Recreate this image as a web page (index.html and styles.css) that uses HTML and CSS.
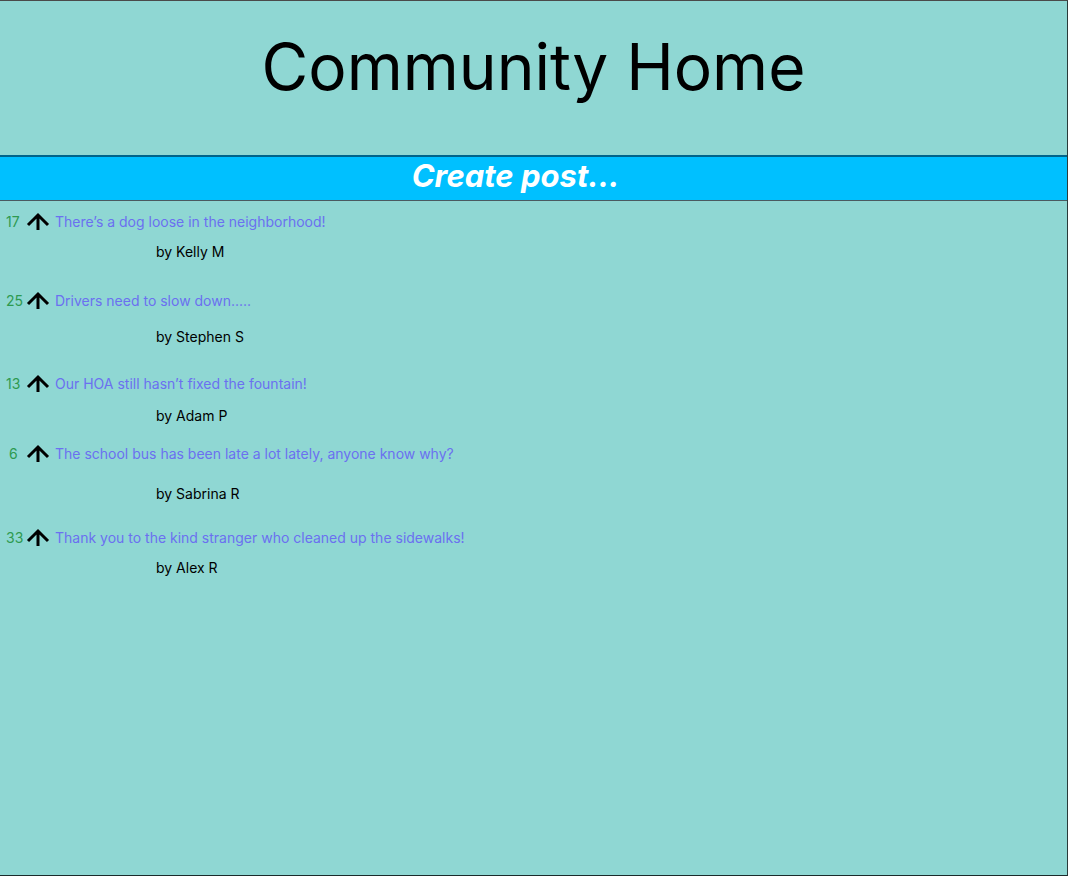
FILE: index.html
```html
<!DOCTYPE html>
<html>
<head>
<meta charset="utf-8">
<link rel="stylesheet" href="styles.css">
</head>
<body>
<div class="page">
  <header class="header">
    <h1 class="title">Community Home</h1>
  </header>
  <div class="create">Create post...</div>
  <ul class="posts">
    <li class="post p1">
      <div class="line"><span class="votes">17</span><svg class="up" viewBox="0 0 24 18" width="24" height="18"><path d="M2 13 L12 3 L22 13 M12 3 V18" fill="none" stroke="#000" stroke-width="3"/></svg><span class="ptitle">There’s a dog loose in the neighborhood!</span></div>
      <div class="author a1">by Kelly M</div>
    </li>
    <li class="post p2">
      <div class="line"><span class="votes">25</span><svg class="up" viewBox="0 0 24 18" width="24" height="18"><path d="M2 13 L12 3 L22 13 M12 3 V18" fill="none" stroke="#000" stroke-width="3"/></svg><span class="ptitle">Drivers need to slow down.....</span></div>
      <div class="author a2">by Stephen S</div>
    </li>
    <li class="post p3">
      <div class="line"><span class="votes">13</span><svg class="up" viewBox="0 0 24 18" width="24" height="18"><path d="M2 13 L12 3 L22 13 M12 3 V18" fill="none" stroke="#000" stroke-width="3"/></svg><span class="ptitle">Our HOA still hasn’t fixed the fountain!</span></div>
      <div class="author a3">by Adam P</div>
    </li>
    <li class="post p4">
      <div class="line"><span class="votes single">6</span><svg class="up" viewBox="0 0 24 18" width="24" height="18"><path d="M2 13 L12 3 L22 13 M12 3 V18" fill="none" stroke="#000" stroke-width="3"/></svg><span class="ptitle">The school bus has been late a lot lately, anyone know why?</span></div>
      <div class="author a4">by Sabrina R</div>
    </li>
    <li class="post p5">
      <div class="line"><span class="votes">33</span><svg class="up" viewBox="0 0 24 18" width="24" height="18"><path d="M2 13 L12 3 L22 13 M12 3 V18" fill="none" stroke="#000" stroke-width="3"/></svg><span class="ptitle">Thank you to the kind stranger who cleaned up the sidewalks!</span></div>
      <div class="author a5">by Alex R</div>
    </li>
  </ul>
</div>
</body>
</html>
```

FILE: styles.css
```css
html, body {
  margin: 0;
  padding: 0;
}
body {
  background: #8fd7d3;
  font-family: Inter, "Noto Sans", sans-serif;
}
.page {
  box-sizing: border-box;
  width: 1068px;
  height: 876px;
  background: #8fd7d3;
  border-top: 1px solid #4a4a4a;
  border-right: 1px solid #2a3a3a;
  border-bottom: 1px solid #1a2a2a;
}
.header {
  height: 154px;
  display: flex;
  justify-content: center;
}
.title {
  margin: 26px 0 0 0;
  font-weight: 400;
  font-size: 64px;
  line-height: 80px;
  color: #000;
}
.create {
  box-sizing: border-box;
  height: 46px;
  background: #00c0ff;
  border-top: 2px solid #00648a;
  border-bottom: 1px solid #4a5a60;
  color: #fff;
  font-weight: 700;
  font-style: italic;
  font-size: 31px;
  line-height: 38px;
  text-align: center;
  padding-right: 36px;
}
.posts {
  list-style: none;
  margin: 0;
  padding: 0;
}
.post {
  display: flex;
  flex-direction: column;
}
.line {
  display: flex;
  align-items: center;
  height: 20px;
  font-size: 14px;
}
.votes {
  width: 21px;
  padding-left: 6px;
  color: #2e9a50;
}
.votes.single {
  padding-left: 9px;
  width: 18px;
}
.up {
  margin-right: 5px;
  margin-left: -1px;
}
.ptitle {
  color: #6b70f0;
}
.author {
  padding-left: 156px;
  font-size: 14px;
  line-height: 20px;
  color: #000;
}
.p1 { margin-top: 10px; }
.a1 { margin-top: 11px; }
.p2 { margin-top: 28px; }
.a2 { margin-top: 17px; }
.p3 { margin-top: 26px; }
.a3 { margin-top: 13px; }
.p4 { margin-top: 17px; }
.a4 { margin-top: 21px; }
.p5 { margin-top: 23px; }
.a5 { margin-top: 11px; }
```
